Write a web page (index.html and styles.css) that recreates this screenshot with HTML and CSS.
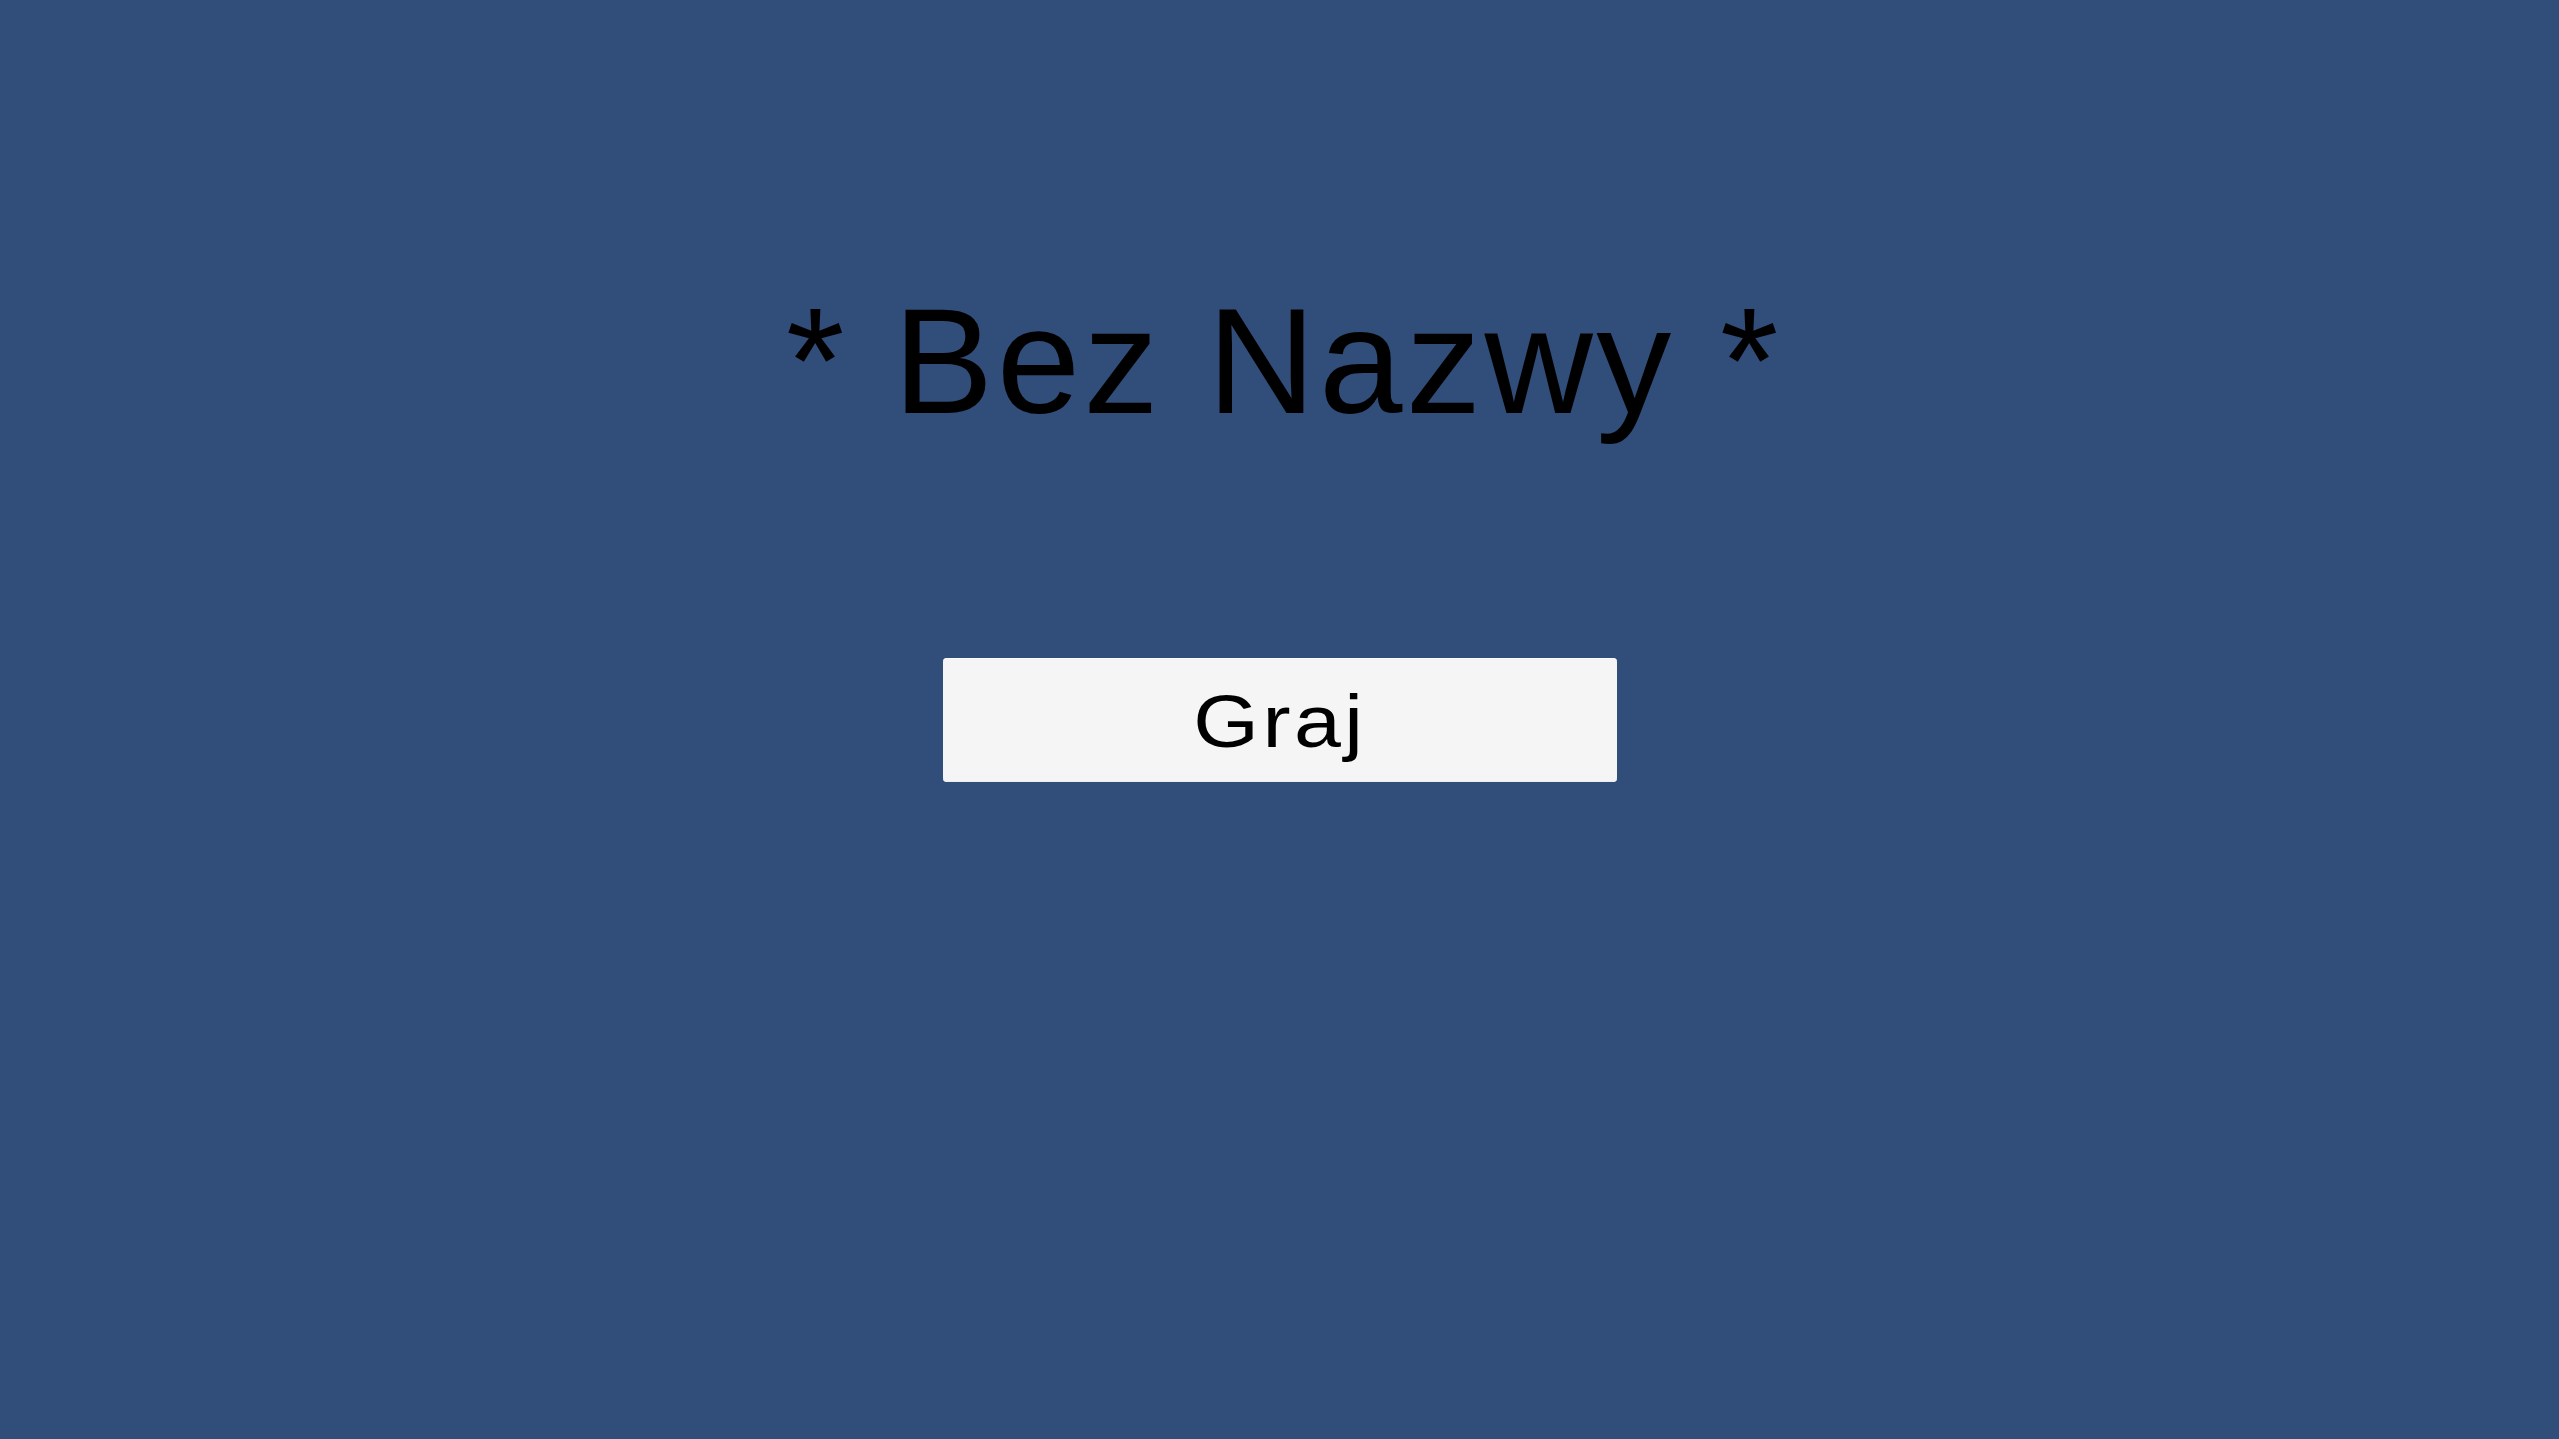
FILE: index.html
```html
<!DOCTYPE html>
<html lang="pl">
<head>
<meta charset="utf-8">
<title>Bez Nazwy</title>
<link rel="stylesheet" href="styles.css">
</head>
<body>
<main class="menu">
  <h1 class="title">* Bez Nazwy *</h1>
  <button class="play" type="button"><span class="play-label">Graj</span></button>
</main>
</body>
</html>
```

FILE: styles.css
```css
html, body {
  margin: 0;
  padding: 0;
  height: 100%;
  background: #314d79;
}
.menu {
  display: flex;
  flex-direction: column;
  align-items: center;
  padding-top: 286px;
  font-family: "Liberation Sans", Arial, sans-serif;
  color: #000;
}
.title {
  margin: 0;
  padding-left: 9px;
  font-size: 150px;
  font-weight: 400;
  line-height: 150px;
  letter-spacing: 3.5px;
  white-space: pre;
}
.play {
  margin-top: 222px;
  width: 674px;
  height: 124px;
  display: flex;
  align-items: center;
  justify-content: center;
  background: #f5f5f5;
  border: none;
  border-radius: 4px;
  box-shadow: inset 0 1px 0 #fbfbfb, inset 0 -1px 0 #ececec;
  padding: 4px 0 0 0;
  color: #000;
  cursor: pointer;
}
.play-label {
  display: block;
  font-family: "Liberation Sans", Arial, sans-serif;
  font-size: 74px;
  line-height: 74px;
  letter-spacing: 3px;
  transform: scaleX(1.14);
}
```
